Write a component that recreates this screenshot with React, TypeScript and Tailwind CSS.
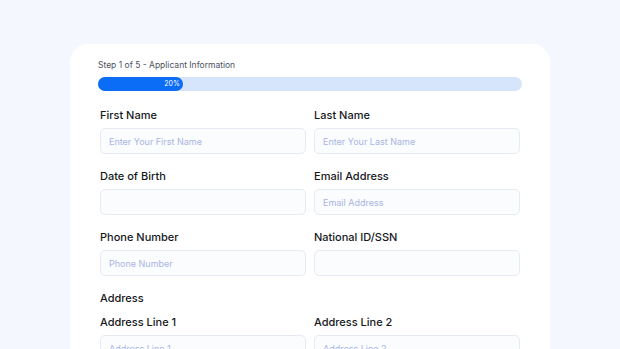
export default function App() {
  const rows: { label: string; placeholder: string }[][] = [
    [
      { label: "First Name", placeholder: "Enter Your First Name" },
      { label: "Last Name", placeholder: "Enter Your Last Name" },
    ],
    [
      { label: "Date of Birth", placeholder: "" },
      { label: "Email Address", placeholder: "Email Address" },
    ],
    [
      { label: "Phone Number", placeholder: "Phone Number" },
      { label: "National ID/SSN", placeholder: "" },
    ],
  ];

  return (
    <div className="min-h-screen bg-[#f4f7fd] pt-[44px] font-['Inter',sans-serif] overflow-hidden">
      <div className="ml-[70px] w-[480px] rounded-t-[18px] bg-white px-[28px] pt-[15px] pb-[40px]">
        <p className="text-[8.5px] leading-[12px] text-[#4b5262]">Step 1 of 5 - Applicant Information</p>

        {/* progress */}
        <div className="mt-[6px] h-[14px] w-full rounded-full bg-[#d6e5fb]">
          <div className="flex h-full w-[20%] items-center justify-end rounded-full bg-[#0b6cf6] pr-[3px]">
            <span className="text-[7px] text-white">20%</span>
          </div>
        </div>

        <div className="mt-[17px] px-[2px]">
          {rows.map((row, i) => (
            <div key={i} className="mb-[15px] grid grid-cols-2 gap-[8px]">
              {row.map((f) => (
                <div key={f.label}>
                  <label className="block text-[11px] leading-[14px] font-medium text-[#16181d]">{f.label}</label>
                  <input
                    placeholder={f.placeholder}
                    className="mt-[6px] block h-[26px] w-full rounded-[5px] border border-[#e6eaf2] bg-[#fbfcfe] pl-[8px] text-[9px] placeholder:text-[#a8b5e4] outline-none"
                  />
                </div>
              ))}
            </div>
          ))}

          <p className="text-[11px] leading-[14px] font-medium text-[#16181d]">Address</p>
          <div className="mt-[10px] grid grid-cols-2 gap-[8px]">
            {["Address Line 1", "Address Line 2"].map((l) => (
              <div key={l}>
                <label className="block text-[11px] leading-[14px] font-medium text-[#16181d]">{l}</label>
                <input
                  placeholder={l}
                  className="mt-[6px] block h-[26px] w-full rounded-[5px] border border-[#e6eaf2] bg-[#fbfcfe] pl-[8px] text-[9px] placeholder:text-[#a8b5e4] outline-none"
                />
              </div>
            ))}
          </div>
        </div>
      </div>
    </div>
  );
}
